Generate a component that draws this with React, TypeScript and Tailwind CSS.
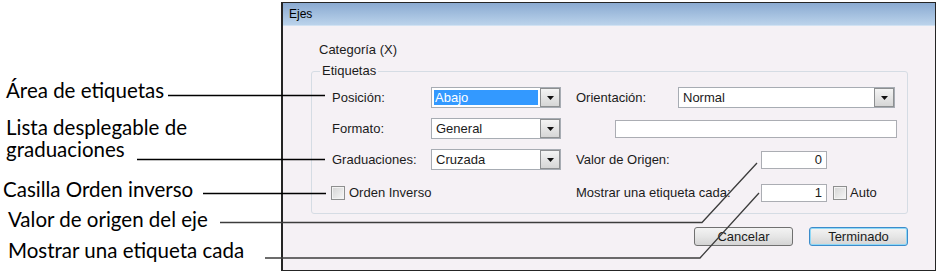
import React from "react";

const ui = { fontFamily: '"Liberation Sans", Arial, sans-serif' };
const note = { fontFamily: 'Lato, "Open Sans", sans-serif' };

function Arrow() {
  return (
    <svg width="7" height="4" viewBox="0 0 7 4">
      <path d="M0 0h7L3.5 4z" fill="#111" />
    </svg>
  );
}

function Select({ value, width, selected }: { value: string; width: string; selected?: boolean }) {
  return (
    <div className={`flex h-[21px] ${width} border border-[#a7acb3] bg-white`}>
      <div className="flex flex-1 min-w-0 items-center">
        {selected ? (
          <div className="m-[2px] flex h-[15px] flex-1 items-center bg-[#3399ff] px-[1px] text-white">{value}</div>
        ) : (
          <div className="px-[4px] leading-[15px]">{value}</div>
        )}
      </div>
      <div className="flex w-[20px] items-center justify-center border border-[#8d8f91] bg-linear-to-b from-[#f4f4f4] to-[#d6d6d6]">
        <Arrow />
      </div>
    </div>
  );
}

function Field({ value, width }: { value?: string; width: string }) {
  return (
    <div className={`flex h-[18px] ${width} items-center justify-end border border-[#abadb3] bg-white pr-[4px]`}>
      {value}
    </div>
  );
}

function Check() {
  return (
    <div className="h-[14px] w-[14px] border border-[#8e8f8f] bg-linear-to-br from-[#d4d4d4] to-[#f7f7f7] shadow-[inset_0_0_0_1px_#f3f3f3]" />
  );
}

function Button({ label, active }: { label: string; active?: boolean }) {
  return (
    <div
      className={`flex h-[19px] w-[99px] items-center justify-center rounded-[3px] border bg-linear-to-b from-[#f3f3f3] via-[#e6e6e6] to-[#d4d4d4] text-[13px] ${
        active ? "border-[#3c8ccb] shadow-[inset_0_0_0_1px_#8fd8f6]" : "border-[#707070]"
      }`}
    >
      {label}
    </div>
  );
}

export default function App() {
  return (
    <div className="relative flex h-[274px] w-[940px] overflow-hidden bg-white text-black">
      {/* callouts */}
      <div className="flex w-[281px] shrink-0 flex-col pt-[79px] text-[20.5px] leading-[22px]" style={note}>
        <div className="ml-[6px]">Área de etiquetas</div>
        <div className="ml-[6px] mt-[15px]">
          Lista desplegable de
          <br />
          graduaciones
        </div>
        <div className="ml-[3px] mt-[18px]">Casilla Orden inverso</div>
        <div className="ml-[8px] mt-[8px]">Valor de origen del eje</div>
        <div className="ml-[8px] mt-[9px]">Mostrar una etiqueta cada</div>
      </div>

      {/* dialog */}
      <div
        className="mt-[2px] flex h-[269px] w-[655px] shrink-0 flex-col border border-l-2 border-[#252525] shadow-[inset_-1px_-1px_0_#4aa6d4] text-[13px] text-[#1b1b1b]"
        style={ui}
      >
        <div className="flex h-[23px] items-center border-b border-[#d2e2f2] bg-linear-to-b from-[#8aaad1] to-[#bbd3eb] pl-[6px] text-[12px] text-black">
          Ejes
        </div>
        <div className="flex flex-1 flex-col bg-[#f5f1f5] pl-[28px] pr-[27px] pt-[16px]">
          <div className="ml-[8px] h-[16px] leading-[16px]">Categoría (X)</div>
          <fieldset className="mt-[5px] rounded-[3px] border border-[#d5dce4] p-0">
            <legend className="ml-[8px] px-[2px] leading-[16px]">Etiquetas</legend>
            <div className="flex flex-col pb-[10px] pl-[20px] pt-[8px]">
              <div className="flex h-[21px] items-center">
                <div className="w-[99px]">Posición:</div>
                <Select value="Abajo" width="w-[130px]" selected />
                <div className="ml-[15px] w-[102px]">Orientación:</div>
                <Select value="Normal" width="w-[217px]" />
              </div>
              <div className="mt-[10px] flex h-[21px] items-center">
                <div className="w-[99px]">Formato:</div>
                <Select value="General" width="w-[130px]" />
                <div className="ml-[15px] w-[39px]" />
                <Field width="w-[282px]" />
              </div>
              <div className="mt-[10px] flex h-[21px] items-center">
                <div className="w-[99px]">Graduaciones:</div>
                <Select value="Cruzada" width="w-[130px]" />
                <div className="ml-[15px] w-[185px]">Valor de Origen:</div>
                <Field value="0" width="w-[66px]" />
              </div>
              <div className="mt-[12px] flex h-[21px] items-center">
                <div className="-ml-[1px] flex w-[230px] items-center gap-[4px]">
                  <Check />
                  <span>Orden Inverso</span>
                </div>
                <div className="ml-[15px] w-[185px]">Mostrar una etiqueta cada:</div>
                <Field value="1" width="w-[66px]" />
                <div className="ml-[6px] flex items-center gap-[3px]">
                  <Check />
                  <span>Auto</span>
                </div>
              </div>
            </div>
          </fieldset>
          <div className="mt-[13px] flex justify-end gap-[16px]">
            <Button label="Cancelar" />
            <Button label="Terminado" active />
          </div>
        </div>
      </div>

      {/* leader lines */}
      <svg className="pointer-events-none absolute inset-0" width="940" height="274" viewBox="0 0 940 274">
        <g fill="none" strokeWidth="1.3">
          <path d="M168 95.5H325" stroke="#000" />
          <path d="M137 159.5H325" stroke="#000" />
          <path d="M203 193.5H326" stroke="#000" />
          <path d="M220 222.5H702L757 163" stroke="#3c3c3c" />
          <path d="M265 258H700L759 193" stroke="#3c3c3c" />
        </g>
      </svg>
    </div>
  );
}
